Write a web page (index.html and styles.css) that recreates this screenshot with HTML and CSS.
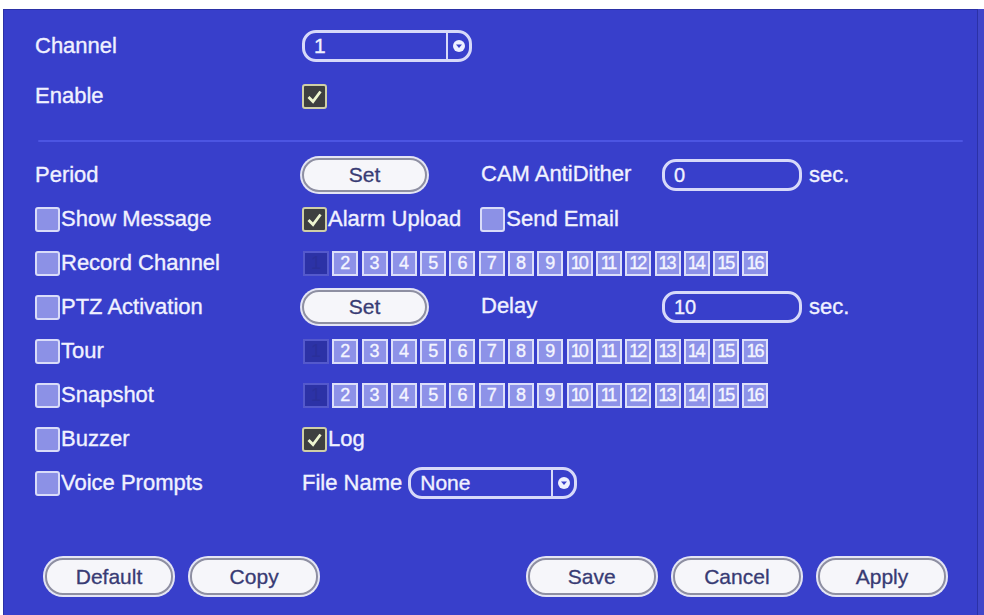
FILE: index.html
```html
<!DOCTYPE html>
<html>
<head>
    <title>Alarm Setup</title>
    <link rel="stylesheet" href="styles.css">
</head>
<body>
    <div class="panel">
        <div class="row row-top">
            <div class="label">Channel</div>
            <div class="field">
                <div class="select sel-channel">
                    <span class="select-text">1</span>
                    <span class="arrow"><svg width="12" height="12" viewBox="0 0 12 12"><circle cx="6" cy="6" r="6" fill="#eef0ff"/><path d="M3 4.5 L9 4.5 L6 8 Z" fill="#3a40c8"/></svg></span>
                </div>
            </div>
        </div>
        <div class="row row-enable">
            <div class="label">Enable</div>
            <div class="field">
                <span class="chk on"><svg width="19" height="19" viewBox="0 0 19 19"><path d="M3.5 10 L8 14.5 L15.5 4.5" fill="none" stroke="#eef6d0" stroke-width="2.8"/></svg></span>
            </div>
        </div>

        <div class="sep"></div>

        <div class="row">
            <div class="label">Period</div>
            <div class="field">
                <button class="btn btn-set">Set</button>
                <span class="sub-label">CAM AntiDither</span>
                <div class="input">0</div>
                <span class="unit">sec.</span>
            </div>
        </div>
        <div class="row">
            <div class="label"><span class="chk"></span>Show Message</div>
            <div class="field">
                <span class="chk on"><svg width="19" height="19" viewBox="0 0 19 19"><path d="M3.5 10 L8 14.5 L15.5 4.5" fill="none" stroke="#eef6d0" stroke-width="2.8"/></svg></span>Alarm Upload
                <span class="chk chk-gap"></span>Send Email
            </div>
        </div>
        <div class="row">
            <div class="label"><span class="chk"></span>Record Channel</div>
            <div class="field chans" id="rec"></div>
        </div>
        <div class="row">
            <div class="label"><span class="chk"></span>PTZ Activation</div>
            <div class="field">
                <button class="btn btn-set">Set</button>
                <span class="sub-label">Delay</span>
                <div class="input">10</div>
                <span class="unit">sec.</span>
            </div>
        </div>
        <div class="row">
            <div class="label"><span class="chk"></span>Tour</div>
            <div class="field chans" id="tour"></div>
        </div>
        <div class="row">
            <div class="label"><span class="chk"></span>Snapshot</div>
            <div class="field chans" id="snap"></div>
        </div>
        <div class="row">
            <div class="label"><span class="chk"></span>Buzzer</div>
            <div class="field">
                <span class="chk on"><svg width="19" height="19" viewBox="0 0 19 19"><path d="M3.5 10 L8 14.5 L15.5 4.5" fill="none" stroke="#eef6d0" stroke-width="2.8"/></svg></span>Log
            </div>
        </div>
        <div class="row">
            <div class="label"><span class="chk"></span>Voice Prompts</div>
            <div class="field">
                <span class="file-label">File Name</span>
                <div class="select sel-file">
                    <span class="select-text">None</span>
                    <span class="arrow"><svg width="12" height="12" viewBox="0 0 12 12"><circle cx="6" cy="6" r="6" fill="#eef0ff"/><path d="M3 4.5 L9 4.5 L6 8 Z" fill="#3a40c8"/></svg></span>
                </div>
            </div>
        </div>

        <div class="footer">
            <div class="footer-left">
                <button class="btn">Default</button>
                <button class="btn">Copy</button>
            </div>
            <div class="footer-right">
                <button class="btn">Save</button>
                <button class="btn">Cancel</button>
                <button class="btn">Apply</button>
            </div>
        </div>
    </div>

    <script>
        // channel boxes 1..16, the first one is off
        ['rec', 'tour', 'snap'].forEach(function(id) {
            var row = document.getElementById(id);
            for (var i = 1; i <= 16; i++) {
                var box = document.createElement('span');
                box.className = 'ch' + (i === 1 ? ' off' : '') + (i > 9 ? ' two' : '');
                box.textContent = i;
                row.appendChild(box);
            }
        });
    </script>
</body>
</html>
```

FILE: styles.css
```css
body {
    margin: 0;
    padding: 0;
    background-color: #fff;
    font-family: "Liberation Sans", Arial, sans-serif;
    overflow: hidden;
}

.panel {
    margin: 9px 0 0 3px;
    width: 975px;
    height: 620px;
    box-sizing: border-box;
    background-color: #383fcb;
    border: 1px solid #2b31a6;
    box-shadow: 6px 0 0 #4046c9;
    padding: 14px 31px 0 31px;
    color: #f0f1ff;
    font-size: 22px;
    -webkit-text-stroke: 0.35px;
}

.row {
    display: flex;
    align-items: center;
    height: 44px;
}

.row-enable {
    margin-top: 6px;
}

.label {
    width: 267px;
    display: flex;
    align-items: center;
    flex-shrink: 0;
}

.field {
    display: flex;
    align-items: center;
}

.sep {
    height: 2px;
    background-color: #4c55e2;
    margin: 22px -17px 11px 3px;
    border-radius: 1px;
}

/* checkboxes */
.chk {
    width: 25px;
    height: 25px;
    box-sizing: border-box;
    border: 2px solid #d9dcf9;
    background-color: #8c91e6;
    border-radius: 3px;
    margin-right: 1px;
    display: inline-flex;
    align-items: center;
    justify-content: center;
    flex-shrink: 0;
}

.chk.on {
    background-color: #3e4040;
    border-color: #cfcfa6;
}

.chk-gap {
    margin-left: 19px;
}

/* buttons */
.btn {
    font-family: "Liberation Sans", Arial, sans-serif;
    font-size: 21px;
    color: #383b74;
    -webkit-text-stroke: 0.3px;
    background-color: #f6f6fa;
    border: 2px solid #8e8fa2;
    box-shadow: 0 0 0 2px #e4e5f4;
    border-radius: 17px;
    height: 34px;
    width: 125px;
    padding: 0;
}

.btn-set {
    margin-right: 54px;
}

.sub-label {
    width: 181px;
    margin-top: -3px;
}

.unit {
    margin-left: 7px;
}

/* text inputs */
.input {
    width: 140px;
    height: 32px;
    box-sizing: border-box;
    border: 3px solid #d7d9f9;
    border-radius: 14px;
    padding-left: 9px;
    line-height: 26px;
    font-size: 20px;
}

/* select boxes */
.select {
    height: 32px;
    box-sizing: border-box;
    border: 3px solid #d7d9f9;
    border-radius: 14px;
    display: flex;
    align-items: center;
    font-size: 21px;
}

.select-text {
    flex: 1;
    padding-left: 9px;
}

.select .arrow {
    width: 21px;
    height: 100%;
    border-left: 2px solid #d7d9f9;
    display: flex;
    align-items: center;
    justify-content: center;
}

.sel-channel {
    width: 170px;
}

.sel-file {
    width: 169px;
}

.file-label {
    margin-right: 6px;
}

/* channel number boxes */
.chans {
    gap: 3.3px;
    margin-left: 1px;
}

.ch {
    width: 26px;
    height: 25px;
    box-sizing: border-box;
    border: 2px solid #dcdffa;
    background-color: #8d92e8;
    color: #f4f5ff;
    font-size: 18px;
    line-height: 21px;
    text-align: center;
}

.ch.two {
    letter-spacing: -2px;
    text-indent: -2px;
}

.ch.off {
    background-color: #2c32a6;
    border-color: #5459cc;
    color: #2a2f9a;
    -webkit-text-stroke: 0;
}

/* footer buttons */
.footer {
    display: flex;
    justify-content: space-between;
    margin-top: 53px;
    padding-left: 10px;
}

.footer .btn {
    height: 37px;
    width: 128px;
    border-radius: 18px;
    margin-right: 11px;
}

.footer-right .btn:last-child {
    margin-right: 0;
}
```
